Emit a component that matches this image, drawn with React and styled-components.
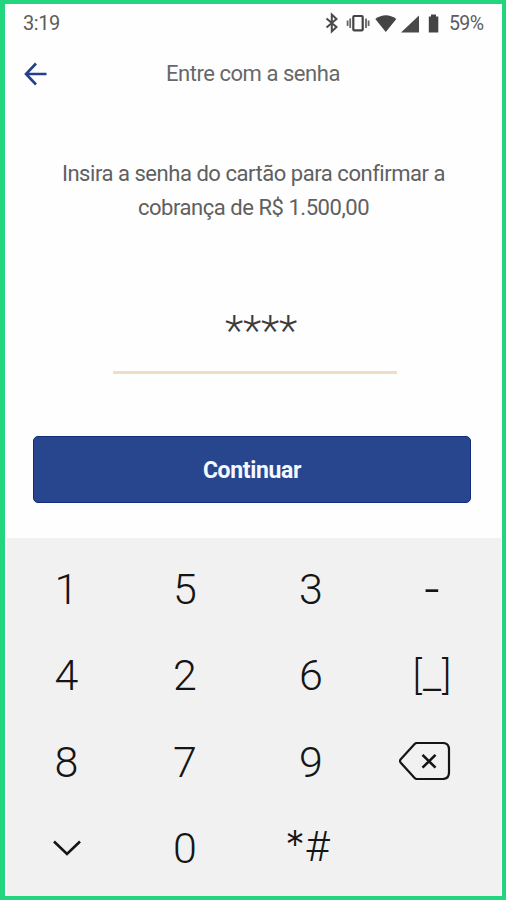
import React from 'react';
import styled, { createGlobalStyle } from 'styled-components';

const keys = [
  { id: '1', label: '1' },
  { id: '5', label: '5' },
  { id: '3', label: '3' },
  { id: 'dash', icon: 'dash' },
  { id: '4', label: '4' },
  { id: '2', label: '2' },
  { id: '6', label: '6' },
  { id: 'space', icon: 'space' },
  { id: '8', label: '8' },
  { id: '7', label: '7' },
  { id: '9', label: '9' },
  { id: 'backspace', icon: 'backspace' },
  { id: 'hide', icon: 'hide' },
  { id: '0', label: '0' },
  { id: 'symbols', icon: 'symbols' },
];

const StatusIcons = () => (
  <StatusSvg width="116" height="22" viewBox="0 0 116 22">
    <path d="M1.5 6.5 L11.5 15 L6.8 19.5 V2.5 L11.5 7 L1.5 15.5" fill="none" stroke="#4a4a4a" strokeWidth="2" />
    <rect x="28.3" y="4" width="9.4" height="14.4" rx="1" fill="none" stroke="#444" strokeWidth="2.2" />
    <path d="M25.2 6.5 V16 M22.6 8.6 V13.9 M41 6.5 V16 M43.6 8.6 V13.9" fill="none" stroke="#666" strokeWidth="1.8" />
    <path d="M50.3 7 Q60.8 -0.5 71.3 7 L60.8 20 Z" fill="#444" />
    <path d="M94 3.5 V20.5 H76 Z" fill="#4a4a4a" />
    <path d="M106 2.5 H111 V4.5 H113.3 V20.5 H103.8 V4.5 H106 Z" fill="#444" />
  </StatusSvg>
);

const BackIcon = () => (
  <BackSvg width="24" height="24" viewBox="0 0 24 24">
    <path d="M23.5 12 H3 M13 1.5 L3 12 L13 22.5" />
  </BackSvg>
);

const BackspaceIcon = () => (
  <BackspaceSvg width="52" height="38" viewBox="0 0 52 38">
    <path d="M18 1 H43.5 Q50 1 50 7.5 V30.5 Q50 37 43.5 37 H18 Q16.5 37 15.4 35.8 L1.5 20.4 Q0.5 19 1.5 17.6 L15.4 2.2 Q16.5 1 18 1 Z" />
    <path d="M23.5 12.8 L36.5 25.7 M36.5 12.8 L23.5 25.7" strokeWidth="2.6" />
  </BackspaceSvg>
);

const HideIcon = () => (
  <HideSvg width="28" height="16" viewBox="0 0 28 16">
    <path d="M1 1.5 L14 14 L27 1.5" />
  </HideSvg>
);

const SpaceLabel = () => (
  <Brackets>
    <span>[</span>
    <LowLine>_</LowLine>
    <span>]</span>
  </Brackets>
);

const SymbolsLabel = () => (
  <Symbols>
    <Star>*</Star>
    <span>#</span>
  </Symbols>
);

const icons = {
  dash: () => <Dash>-</Dash>,
  space: SpaceLabel,
  backspace: BackspaceIcon,
  hide: HideIcon,
  symbols: SymbolsLabel,
};

const KeyContent = ({ icon, label }) => {
  if (!icon) return label;
  const Icon = icons[icon];
  return <Icon />;
};

const App = () => (
  <Screen>
    <GlobalStyle />
    <StatusBar>
      <Clock>3:19</Clock>
      <StatusIcons />
      <Battery>59%</Battery>
    </StatusBar>
    <Header>
      <BackIcon />
      <Title>Entre com a senha</Title>
    </Header>
    <Message>
      <Line>Insira a senha do cartão para confirmar a</Line>
      <Line>cobrança de R$ 1.500,00</Line>
    </Message>
    <Password>****</Password>
    <Button>Continuar</Button>
    <Keypad>
      {keys.map(k => (
        <Key key={k.id}><KeyContent {...k} /></Key>
      ))}
    </Keypad>
  </Screen>
);

const GlobalStyle = createGlobalStyle`
  * {
    box-sizing: border-box;
  }

  body {
    margin: 0;
    font-family: Roboto, sans-serif;
    background: #fff;
  }
`;

const Screen = styled.div`
  display: flex;
  flex-direction: column;
  width: 506px;
  height: 900px;
  border: 4px solid #24d580;
  border-left-width: 5px;
  background: #fefefe;
  overflow: hidden;
`;

const StatusBar = styled.div`
  display: flex;
  align-items: center;
  height: 38px;
  padding: 0 18px;
  color: #5c5c5c;
`;

const Clock = styled.span`
  font-size: 20px;
  letter-spacing: -0.4px;
`;

const StatusSvg = styled.svg`
  margin-left: auto;
`;

const Battery = styled.span`
  width: 35px;
  margin-left: 8px;
  font-size: 19.5px;
  letter-spacing: -0.6px;
`;

const Header = styled.div`
  display: flex;
  align-items: center;
  height: 62px;
  padding-left: 18px;
`;

const BackSvg = styled.svg`
  margin-top: 1px;
  fill: none;
  stroke: #243f8c;
  stroke-width: 2.6;
`;

const Title = styled.h1`
  margin: 0 0 0 119px;
  font-size: 22px;
  font-weight: 400;
  letter-spacing: -0.46px;
  color: #686868;
  white-space: nowrap;
`;

const Message = styled.div`
  margin-top: 53px;
  text-align: center;
`;

const Line = styled.div`
  height: 34px;
  line-height: 34px;
  font-size: 22px;
  letter-spacing: -0.46px;
  color: #606060;
  white-space: nowrap;
`;

const Password = styled.div`
  width: 284px;
  height: 73px;
  margin: 76px 0 0 108px;
  padding-left: 12px;
  border-bottom: 3px solid #ecdfc2;
  font-size: 43px;
  font-weight: 300;
  letter-spacing: -0.2px;
  line-height: 59px;
  text-align: center;
  color: #3c3c3c;
`;

const Button = styled.button`
  flex: none;
  width: 438px;
  height: 67px;
  margin: 62px 0 0 28px;
  padding: 2px 0 0;
  border: 1px solid #112c78;
  border-radius: 5px;
  background: #28468d;
  color: #f4f8ff;
  font-family: inherit;
  font-size: 23px;
  font-weight: 700;
  letter-spacing: -0.35px;
`;

const Keypad = styled.div`
  display: grid;
  grid-template-columns: 119px 118px 134px 108px;
  grid-template-rows: 86px 86px 88px 85px;
  flex: 1;
  margin: 35px 1px 0 2px;
  padding-top: 8px;
  background: #f1f1f1;
`;

const Key = styled.div`
  display: flex;
  align-items: center;
  justify-content: center;
  font-size: 43px;
  font-weight: 300;
  line-height: 1;
  color: #151515;
`;

const Dash = styled.span`
  font-size: 54px;
  font-weight: 300;
  line-height: 43px;
`;

const Brackets = styled.span`
  display: flex;
  gap: 1px;
  margin-top: 1px;
  font-size: 38px;
`;

const LowLine = styled.span`
  margin-top: -1px;
  font-size: 42px;
  line-height: 38px;
`;

const BackspaceSvg = styled.svg`
  margin: -2px 14px 0 0;
  fill: none;
  stroke: #151515;
  stroke-width: 2.2;
  stroke-linejoin: round;
`;

const HideSvg = styled.svg`
  margin-top: -1px;
  fill: none;
  stroke: #151515;
  stroke-width: 2.6;
`;

const Symbols = styled.span`
  display: flex;
  margin: -5px 7px 0 0;
`;

const Star = styled.span`
  font-family: Inter, sans-serif;
  font-size: 39px;
`;

export default App;
